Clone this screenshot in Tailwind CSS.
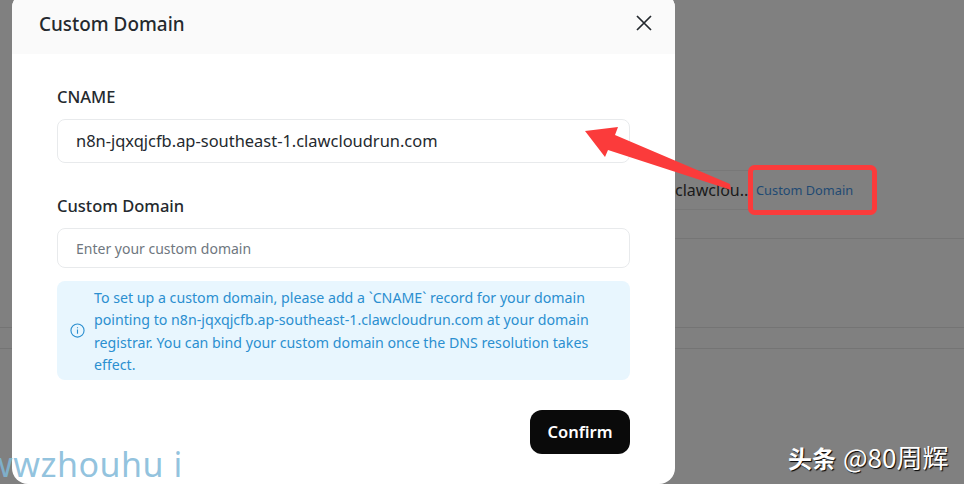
<!DOCTYPE html>
<html lang="en">
<head>
  <meta charset="UTF-8">
  <title>Custom Domain</title>
  <script src="https://cdn.jsdelivr.net/npm/@tailwindcss/browser@4"></script>
</head>
<body class="bg-[#808080] font-['Noto_Sans','Open_Sans',sans-serif]">
  <div class="relative w-[964px] h-[484px] overflow-hidden">

    <!-- Page behind the overlay -->
    <div class="absolute left-[675px] top-[170px] w-[180px] h-[40px] flex items-center">
      <span class="w-[76px] h-[40px] border-y border-[#787878] leading-[38px] whitespace-nowrap text-[16px] text-[#1a1a1a]">clawclou..</span>
      <span class="ml-[5px] pt-[1px] text-[12.8px] text-[#1f4a73]">Custom Domain</span>
    </div>
    <div class="absolute left-[675px] top-[238px] w-[289px] border-t border-[#757575]"></div>
    <div class="absolute left-0 top-[327px] w-full h-[22px] border-y border-[#747474]"></div>

    <!-- Modal -->
    <div class="absolute left-[12px] top-[-8px] w-[663px] h-[492px] bg-white rounded-2xl overflow-hidden">
      <div class="h-[62px] pt-[2px] bg-[#fafafa] flex items-center justify-between pl-[27px] pr-[21px]">
        <h2 class="text-[18.9px] font-medium text-[#24292e]">Custom Domain</h2>
        <svg class="w-[20px] h-[20px] mb-[2px] text-[#24292e]" viewBox="0 0 20 20" fill="none" stroke="currentColor" stroke-width="1.7">
          <path d="M3 3l14 14M17 3L3 17" />
        </svg>
      </div>
      <div class="px-[45px] pt-[32px]">
        <label class="block text-[16.5px] font-medium text-[#24292e] leading-[22px]">CNAME</label>
        <div class="mt-[11px] h-[44px] pt-[1px] border border-[#e8eaec] rounded-lg flex items-center px-[18px] text-[16.45px] text-[#24292e]">n8n-jqxqjcfb.ap-southeast-1.clawcloudrun.com</div>

        <label class="block mt-[32px] text-[16.5px] font-medium text-[#24292e] leading-[22px]">Custom Domain</label>
        <div class="mt-[11px] h-[40px] border border-[#e8eaec] rounded-lg flex items-center px-[18px] text-[14px] text-[#6f7780]">Enter your custom domain</div>

        <div class="mt-[13px] h-[99px] bg-[#e8f6fe] rounded-lg flex items-center pl-[13px] pr-[24px] text-[#2b8fd0]">
          <svg class="w-[15px] h-[15px] shrink-0" viewBox="0 0 16 16" fill="none" stroke="currentColor" stroke-width="1.2">
            <circle cx="8" cy="8" r="7" />
            <path d="M8 7v4.5M8 4.4v1.2" />
          </svg>
          <p class="ml-[9px] pt-[2px] text-[14.2px] leading-[22.5px]">To set up a custom domain, please add a `CNAME` record for your domain pointing to n8n-jqxqjcfb.ap-southeast-1.clawcloudrun.com at your domain registrar. You can bind your custom domain once the DNS resolution takes effect.</p>
        </div>

        <div class="mt-[30px] flex justify-end">
          <button class="w-[100px] h-[44px] pt-[1px] bg-[#0a0a0a] text-white rounded-xl text-[16.5px] font-semibold">Confirm</button>
        </div>
      </div>
    </div>

    <!-- Red annotations on top of the screenshot -->
    <svg class="absolute left-0 top-0 pointer-events-none" width="964" height="484" viewBox="0 0 964 484" fill="none">
      <path d="M585 131L618 127L615 135L730 184L731 190L608 150L605 157Z" fill="#fb3b3b" />
      <rect x="750.5" y="167.5" width="124" height="45" rx="4" stroke="#fb3b3b" stroke-width="5" />
    </svg>

    <!-- Watermarks -->
    <span class="absolute left-[-14px] top-[441px] text-[34px] leading-[46px] tracking-[0.5px] text-[#7fb8d8]/85 whitespace-pre">wwzhouhu i</span>
    <span class="absolute left-[788px] top-[440px] leading-[34px] text-white [text-shadow:1px_1px_1px_#000] font-['Noto_Sans_CJK_SC',sans-serif] whitespace-nowrap"><span class="text-[24px] font-bold">头条</span><span class="text-[26px] ml-[7px]">@80周辉</span></span>
  </div>
</body>
</html>
